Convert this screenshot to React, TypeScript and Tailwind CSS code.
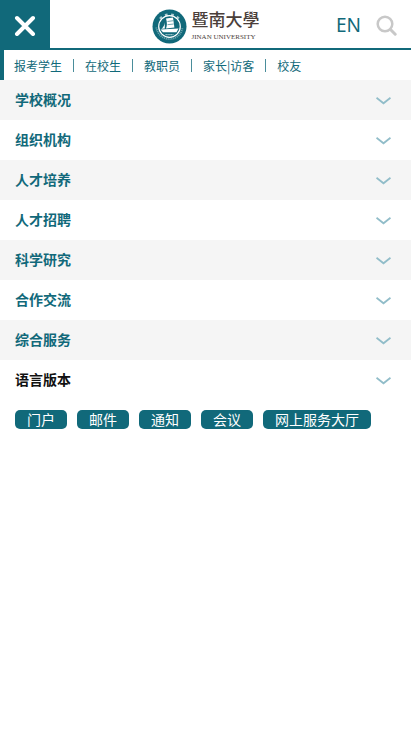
const audiences = ["报考学生", "在校生", "教职员", "家长|访客", "校友"];

const sections = [
    { name: "学校概况" },
    { name: "组织机构" },
    { name: "人才培养" },
    { name: "人才招聘" },
    { name: "科学研究" },
    { name: "合作交流" },
    { name: "综合服务" },
    { name: "语言版本", dark: true },
];

const services = ["门户", "邮件", "通知", "会议", "网上服务大厅"];

function Logo() {
    return (
        <a href="#" aria-label="暨南大學 Jinan University" className="flex items-center gap-[5px] pt-[2px]">
            <svg width="35" height="35" viewBox="0 0 35 35" fill="none">
                <circle cx="17.5" cy="17.5" r="17" fill="#11697a" />
                {/* lettering ring */}
                <path d="M7.5 10.5a12.6 12.6 0 0 1 20 0" stroke="#a9cbd1" strokeWidth="2.6" strokeDasharray="2.6 3.4" strokeDashoffset="-1" />
                <path d="M4.4 18.5a13.2 13.2 0 0 0 26.2 0" stroke="#6fa6b0" strokeWidth="1.8" strokeDasharray="1.1 0.8" />
                <circle cx="17.5" cy="17.5" r="10.8" fill="#11697a" stroke="#fff" strokeWidth="1.2" />
                {/* sailing boat */}
                <path d="M14 9.5 21 8.5 22.4 18.5 14 19.5c1.2-3 1.2-6 0-10Z" fill="#fff" />
                <path d="M12.8 13.5v6l-3.3.3c2-1.7 2.9-3.6 3.3-6.3Z" fill="#fff" />
                <path d="M8.5 20.5 26.5 19.5 24.5 23.2H11Z" fill="#fff" />
                <path d="M15.5 12.5 21.3 11.7M15.5 15.7 21.7 15" stroke="#11697a" strokeWidth="0.6" />
                <path d="M13.5 25.7h8" stroke="#b5d2d7" strokeWidth="1.3" strokeDasharray="1.3 0.6" />
            </svg>
            <span className="flex flex-col gap-[2px] text-[#4a3e3a]">
                <span className="font-['Liberation_Serif','Noto_Sans_CJK_TC',serif] text-[17px] leading-5 font-medium">暨南大學</span>
                <span className="font-['Liberation_Serif',serif] text-[7px] leading-2 whitespace-nowrap">JINAN UNIVERSITY</span>
            </span>
        </a>
    );
}

export default function App() {
    return (
        <div className="min-h-screen bg-white font-['Noto_Sans_CJK_SC',sans-serif] text-[#11697a]">
            <header className="grid h-[50px] grid-cols-[1fr_auto_1fr] items-center border-b-2 border-[#11697a]">
                <button aria-label="关闭菜单" className="flex h-[50px] w-[50px] items-center justify-center self-start bg-[#11697a]">
                    <svg width="22" height="22" viewBox="0 0 22 22" stroke="#fff" strokeWidth="4" strokeLinecap="round">
                        <path d="M3 4 19 20M19 4 3 20" />
                    </svg>
                </button>
                <Logo />
                <div className="flex items-center justify-end gap-[15px] pt-px pr-[14px]">
                    <a href="#" className="font-['Noto_Sans',sans-serif] text-[19px]">EN</a>
                    <button aria-label="搜索">
                        <svg width="21" height="21" viewBox="0 0 21 21" fill="none" stroke="#c8c8c8">
                            <circle cx="9" cy="9" r="7.3" strokeWidth="2.5" />
                            <path d="m14.5 14.5 4.7 4.7" strokeWidth="3" strokeLinecap="round" />
                        </svg>
                    </button>
                </div>
            </header>

            <nav className="flex h-[30px] items-center border-l-4 border-[#11697a] pt-px pl-[10px] text-xs">
                {audiences.map((name, i) => (
                    <div key={name} className="flex items-center">
                        {i > 0 && <span className="mx-[11px] h-[13px] w-px bg-[#4a8d9b]" />}
                        <a href="#">{name}</a>
                    </div>
                ))}
            </nav>

            <ul>
                {sections.map((section) => (
                    <li key={section.name} className="odd:bg-[#f5f5f5] last:bg-white">
                        <button
                            className={`flex h-10 w-full items-center justify-between pr-5 pb-[2px] pl-[15px] text-sm font-bold ${section.dark ? "text-[#111]" : ""}`}
                        >
                            {section.name}
                            <svg width="15" height="12" viewBox="0 0 15 12" fill="none" stroke="#91bdc9" strokeWidth="1.8">
                                <path d="M0.5 4.8 7.5 10.3 14.5 4.8" />
                            </svg>
                        </button>
                    </li>
                ))}
            </ul>

            <div className="flex flex-wrap gap-[10px] px-[15px] pt-[10px]">
                {services.map((name) => (
                    <a key={name} href="#" className="rounded-[5px] bg-[#11697a] px-3 text-sm leading-[19px] text-white">
                        {name}
                    </a>
                ))}
            </div>
        </div>
    );
}
